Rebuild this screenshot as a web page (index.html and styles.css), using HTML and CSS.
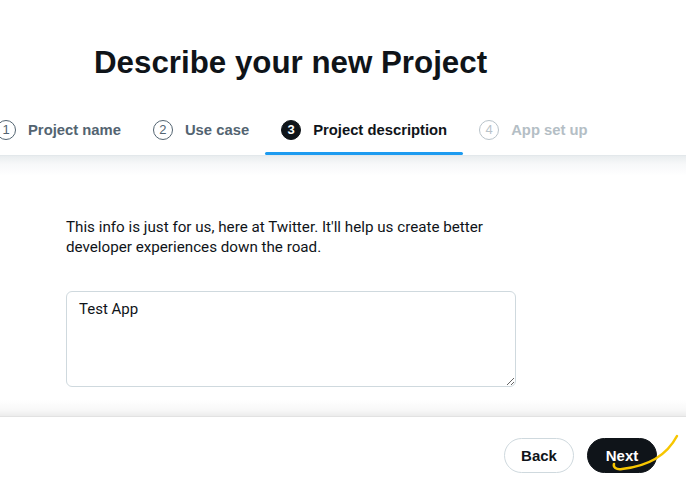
FILE: index.html
```html
<!DOCTYPE html>
<html lang="en">
<head>
<meta charset="utf-8">
<title>Describe your new Project</title>
<link rel="stylesheet" href="styles.css">
</head>
<body>
<header class="top">
  <h1 class="title">Describe your new Project</h1>
  <nav class="steps">
    <div class="step done"><div class="step-inner"><span class="num">1</span><span class="label">Project name</span></div><div class="bar"></div></div>
    <div class="step done"><div class="step-inner"><span class="num">2</span><span class="label">Use case</span></div><div class="bar"></div></div>
    <div class="step active"><div class="step-inner"><span class="num">3</span><span class="label">Project description</span></div><div class="bar"></div></div>
    <div class="step todo"><div class="step-inner"><span class="num">4</span><span class="label">App set up</span></div><div class="bar"></div></div>
  </nav>
</header>
<main class="content">
  <p class="intro">This info is just for us, here at Twitter. It'll help us create better developer experiences down the road.</p>
  <textarea class="desc">Test App</textarea>
</main>
<footer class="actions">
  <button class="btn back">Back</button>
  <button class="btn next">Next</button>
  <svg class="scribble" width="80" height="45" viewBox="0 0 80 45" aria-hidden="true"><path d="M71 5 C62 22 44 35 16 38 C10 39 7 36 8 33" fill="none" stroke="#f7c600" stroke-width="2.5" stroke-linecap="round"/></svg>
</footer>
</body>
</html>
```
FILE: styles.css
```css
* { box-sizing: border-box; }
html, body { margin: 0; padding: 0; background: #fff; }
body { font-family: "Liberation Sans", Arial, sans-serif; color: #0f1419; width: 686px; height: 485px; overflow: hidden; }

.top { border-bottom: 1px solid #e3e8eb; }
.title { margin: 45px 0 0 94px; font-size: 31.3px; line-height: 36px; font-weight: 700; color: #0f1419; }
.steps { display: flex; margin: 23px 0 0 -20px; }
.step { display: flex; flex-direction: column; padding: 0 16px; }
.step-inner { display: flex; align-items: center; height: 48px; padding-top: 3px; gap: 12px; }
.num { width: 20px; height: 20px; border-radius: 50%; border: 1.5px solid #536471; display: flex; align-items: center; justify-content: center; font-size: 13px; line-height: 1; color: #536471; }
.label { font-size: 14.8px; font-weight: 700; color: #536471; }
.bar { height: 3px; border-radius: 2px; margin: 0 -16px; }
.step.active .num { background: #0f1419; border-color: #0f1419; color: #fff; font-weight: 700; }
.step.active .label { color: #0f1419; }
.step.active .bar { background: #1d9bf0; }
.step.todo .num { border-color: #b9c3ca; color: #b9c3ca; }
.step.todo .label { color: #b4bec5; }

.content {
  padding: 61px 0 29px 66px;
  background:
    linear-gradient(to bottom, #e9edef 0, #f7f8f9 8px, rgba(255,255,255,0) 20px),
    linear-gradient(to top, #ececec 0, #f8f8f8 6px, #fff 16px);
}
.intro { margin: 0; width: 440px; font-family: Roboto, "Liberation Sans", sans-serif; font-size: 15.2px; line-height: 20px; color: #0f1419; }
.desc { display: block; margin-top: 34px; width: 450px; height: 96px; border: 1px solid #cfd9de; border-radius: 6px; padding: 7px 12px; font-family: Roboto, "Liberation Sans", sans-serif; font-size: 15px; line-height: 20px; color: #0f1419; resize: vertical; }

.actions { position: relative; border-top: 1px solid #e2e2e2; display: flex; justify-content: flex-end; gap: 13px; padding: 21px 29px 20px 0; }
.btn { width: 70px; height: 35px; border-radius: 18px; font-family: "Liberation Sans", Arial, sans-serif; font-size: 15px; font-weight: 700; cursor: pointer; }
.btn.back { background: #fff; border: 1px solid #cfd9de; color: #0f1419; }
.btn.next { background: #0f1419; border: 1px solid #0f1419; color: #fff; }
.scribble { position: absolute; left: 606px; top: 14px; }
```
